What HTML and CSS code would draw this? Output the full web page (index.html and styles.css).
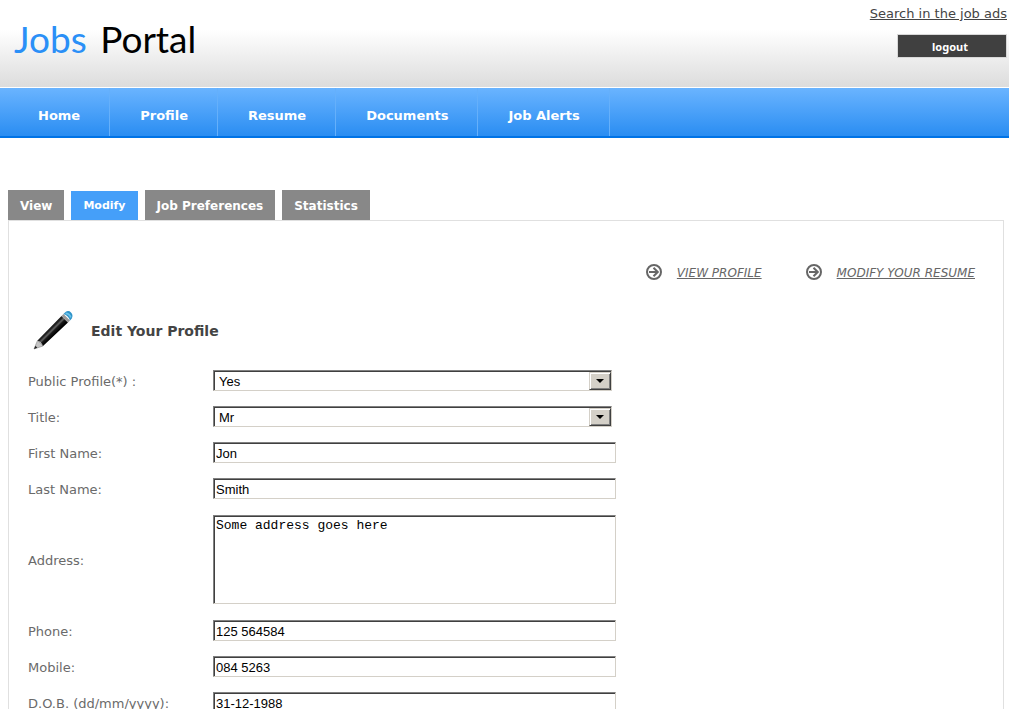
FILE: index.html
```html
<!DOCTYPE html>
<html lang="en">
<head>
<meta charset="utf-8">
<title>Jobs Portal</title>
<link rel="stylesheet" href="styles.css">
</head>
<body>
<header class="header">
  <div class="logo"><span class="logo-accent">Jobs</span> Portal</div>
  <div class="account">
    <a class="search-link" href="#">Search in the job ads</a>
    <button class="logout" type="button">logout</button>
  </div>
</header>
<nav class="nav">
  <a href="#">Home</a>
  <a href="#">Profile</a>
  <a href="#">Resume</a>
  <a href="#">Documents</a>
  <a href="#">Job Alerts</a>
</nav>
<main class="content">
  <div class="tabs">
    <a class="tab" href="#">View</a>
    <a class="tab tab-active" href="#">Modify</a>
    <a class="tab" href="#">Job Preferences</a>
    <a class="tab" href="#">Statistics</a>
  </div>
  <section class="panel">
    <div class="actions">
      <a class="action" href="#">
        <svg class="action-icon" viewBox="0 0 16 16" aria-hidden="true"><circle cx="8" cy="8" r="7"/><path d="M3 8H12M7.500 3.700L11.800 8L7.500 12.300"/></svg>
        <span>VIEW PROFILE</span>
      </a>
      <a class="action" href="#">
        <svg class="action-icon" viewBox="0 0 16 16" aria-hidden="true"><circle cx="8" cy="8" r="7"/><path d="M3 8H12M7.500 3.700L11.800 8L7.500 12.300"/></svg>
        <span>MODIFY YOUR RESUME</span>
      </a>
    </div>
    <div class="heading">
      <svg class="pencil" viewBox="0 0 40 40" aria-hidden="true">
        <defs>
          <linearGradient id="barrel" gradientUnits="userSpaceOnUse" x1="15.5" y1="17.500" x2="22" y2="24">
            <stop offset="0" stop-color="#111"/><stop offset=".3" stop-color="#222"/><stop offset=".5" stop-color="#666"/><stop offset=".65" stop-color="#1a1a1a"/><stop offset="1" stop-color="#000"/>
          </linearGradient>
        </defs>
        <path d="M1 39L4.500 30.500L10 36Z" fill="#c4c4c4" stroke="#888" stroke-width=".6"/>
        <path d="M1 39L2.400 35.800L4.400 37.700Z" fill="#222"/>
        <path d="M4.500 30.500L28.500 6L35 12.500L10 36Q8.500 32 4.500 30.500Z" fill="url(#barrel)"/>
        <path d="M28.500 6L30.500 4L37 10.500L35 12.500Z" fill="#999"/>
        <path d="M30.500 4L32.500 2Q35.500 0 38 2.500Q40.500 5 38.800 8.500L37 10.500Q35.500 5.500 30.500 4Z" fill="#2e93c9"/>
        <path d="M32.500 3.300Q36.500 3.300 37.800 7.500" fill="none" stroke="#6cc3ea" stroke-width="1.800"/>
      </svg>
      <h1>Edit Your Profile</h1>
    </div>
    <form class="form">
      <label for="public">Public Profile(*) :</label>
      <div class="select"><select id="public"><option>Yes</option><option>No</option></select><span class="select-arrow"></span></div>
      <label for="title">Title:</label>
      <div class="select"><select id="title"><option>Mr</option><option>Mrs</option></select><span class="select-arrow"></span></div>
      <label for="first">First Name:</label>
      <input class="field" id="first" type="text" value="Jon">
      <label for="last">Last Name:</label>
      <input class="field" id="last" type="text" value="Smith">
      <label for="address">Address:</label>
      <textarea class="field field-area" id="address">Some address goes here</textarea>
      <label for="phone">Phone:</label>
      <input class="field" id="phone" type="text" value="125 564584">
      <label for="mobile">Mobile:</label>
      <input class="field" id="mobile" type="text" value="084 5263">
      <label for="dob">D.O.B. (dd/mm/yyyy):</label>
      <input class="field" id="dob" type="text" value="31-12-1988">
    </form>
  </section>
</main>
</body>
</html>
```
FILE: styles.css
```css
* { box-sizing: border-box; }

html { scrollbar-width: none; }

body {
  margin: 0;
  background: #fff;
  color: #6a6a6a;
  font: 13px/16px Verdana, "DejaVu Sans", sans-serif;
}

.header {
  display: flex;
  justify-content: space-between;
  height: 88px;
  padding: 6px 2px 0 14px;
  border-bottom: 1px solid #fff;
  background: linear-gradient(#fff 30px, #dcdcdc) padding-box;
}

.logo {
  color: #000;
  font: 37px/66px Lato, sans-serif;
}

.logo-accent {
  margin-right: 4px;
  color: #2a8ff7;
}

.account {
  display: flex;
  flex-direction: column;
  align-items: flex-end;
  gap: 12px;
}

.search-link { color: #444; }

.logout {
  width: 110px;
  height: 24px;
  padding: 2px 4px 0 0;
  border: 1px solid #d8d8d8;
  background: #404040;
  color: #fff;
  font: bold 11px/16px "Noto Sans", sans-serif;
}

.nav {
  display: flex;
  height: 50px;
  padding-left: 8px;
  border-bottom: 2px solid #0073e6;
  background: linear-gradient(#6ab4ff, #2a8df2);
}

.nav a {
  padding: 20px 29px 0 30px;
  border-right: 1px solid #65b0fb;
  color: #fff;
  font-weight: bold;
  text-decoration: none;
}

.content { padding: 52px 5px 0 8px; }

.tabs {
  display: flex;
  align-items: flex-end;
  gap: 7px;
}

.tab {
  padding: 8px 12px 6px;
  background: #888;
  color: #fff;
  font-size: 12px;
  font-weight: bold;
  text-decoration: none;
}

.tab-active {
  padding: 7px 12px 6px;
  background: #459ff9;
  font-size: 11px;
}

.panel {
  padding: 43px 28px 20px 19px;
  border: 1px solid #e0e0e0;
}

.actions {
  display: flex;
  justify-content: flex-end;
  gap: 44px;
}

.action {
  display: flex;
  gap: 15px;
  color: #666;
  font-size: 12px;
  font-style: italic;
  text-decoration: none;
}

.action span {
  padding-top: 1px;
  text-decoration: underline;
}

.action-icon {
  width: 16px;
  height: 16px;
  fill: none;
  stroke: #666;
  stroke-width: 2;
}

.heading {
  display: flex;
  align-items: center;
  gap: 18px;
  margin: 29px 0 20px 5px;
}

.pencil {
  width: 40px;
  height: 40px;
}

.heading h1 {
  margin: 0;
  padding-top: 2px;
  color: #444;
  font-size: 14px;
  line-height: 16px;
}

.form {
  display: grid;
  grid-template-columns: 185px 403px;
  row-gap: 15px;
  align-items: center;
}

.form label { padding-top: 2px; }

.field,
.select {
  height: 21px;
  border: 1px solid #d4d0c8;
  border-top-color: #808080;
  border-left-color: #808080;
  border-radius: 0;
  background: #fff;
  box-shadow: inset 1px 1px #404040;
  color: #000;
  font: 13px/16px "Liberation Sans", Arial, sans-serif;
}

.field {
  width: 100%;
  padding: 2px 2px 0;
}

.field-area {
  display: block;
  height: 89px;
  margin: 1px 0;
  font-family: "Liberation Mono", "Courier New", monospace;
  resize: none;
}

.select {
  position: relative;
  width: 399px;
}

.select select {
  width: 100%;
  height: 100%;
  padding: 2px 24px 0 5px;
  border: 0;
  appearance: none;
  background: transparent;
  color: #000;
  font: inherit;
}

.select-arrow {
  position: absolute;
  top: 1px;
  right: 0;
  bottom: 0;
  display: grid;
  place-items: center;
  width: 22px;
  border: 1px solid #404040;
  border-top-color: #d4d0c8;
  border-left-color: #d4d0c8;
  background: #d4d0c8;
  box-shadow: inset 1px 1px #fff, inset -1px -1px #808080;
  pointer-events: none;
}

.select-arrow::after {
  content: "";
  border: 4px solid transparent;
  border-top-color: #000;
  border-bottom: 0;
}
```
